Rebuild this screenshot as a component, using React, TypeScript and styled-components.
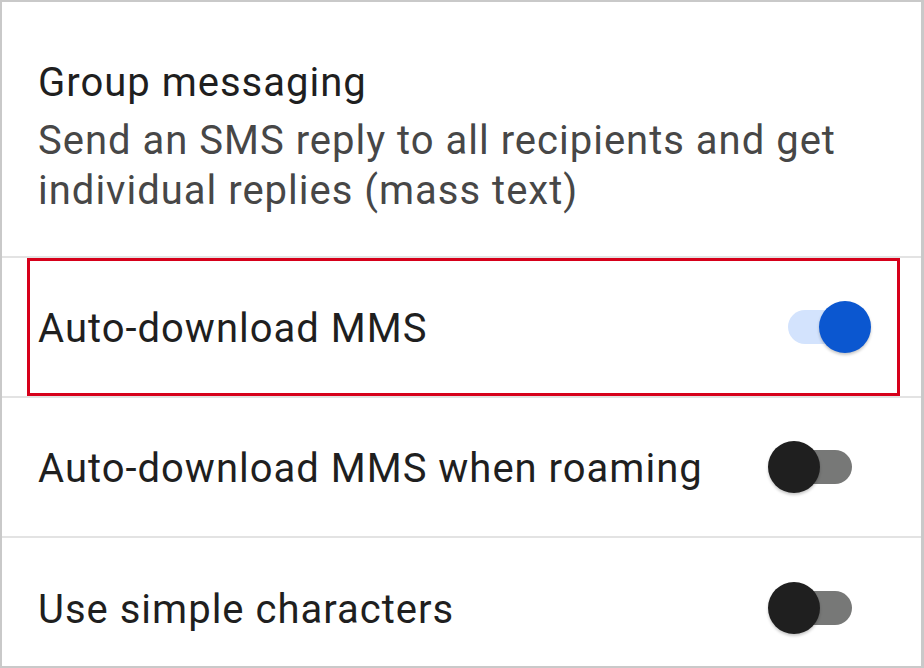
import styled, { createGlobalStyle } from "styled-components";

const GlobalStyle = createGlobalStyle`
  html, body {
    margin: 0;
    padding: 0;
    background: #ffffff;
  }
  body {
    font-family: Roboto, "Noto Sans", "Liberation Sans", sans-serif;
  }
`;

const Frame = styled.div`
  box-sizing: border-box;
  width: 924px;
  height: 668px;
  border: 2px solid #c9c9c9;
  border-right-width: 3px;
  overflow: hidden;
  background: #ffffff;
`;

const Row = styled.div<{ $height: number }>`
  position: relative;
  box-sizing: border-box;
  height: ${(p) => p.$height}px;
  display: flex;
  align-items: center;
  justify-content: space-between;
  padding-left: 36px;
  border-bottom: 2px solid #e3e3e3;

  &:last-child {
    border-bottom: none;
  }
`;

const TextBlock = styled.div`
  display: flex;
  flex-direction: column;
  align-self: flex-start;
  padding-top: 56px;
`;

const Title = styled.div`
  font-size: 40px;
  line-height: 50px;
  letter-spacing: 1px;
  color: #1f1f1f;
`;

const Summary = styled.div`
  margin-top: 8px;
  font-size: 40px;
  line-height: 50px;
  letter-spacing: 1px;
  color: #474747;
`;

const Label = styled.div`
  font-size: 40px;
  line-height: 50px;
  letter-spacing: 1px;
  color: #1f1f1f;
  padding-top: 4px;
`;

const Highlight = styled.div`
  position: absolute;
  left: 25px;
  right: 21px;
  top: 0;
  bottom: 0;
  border: 3px solid #d6001a;
  pointer-events: none;
`;

const Track = styled.div<{ $on: boolean }>`
  position: relative;
  width: 78px;
  height: 34px;
  border-radius: 17px;
  margin-right: ${(p) => (p.$on ? 55 : 69)}px;
  background: ${(p) => (p.$on ? "#d3e3fd" : "#777877")};
`;

const Thumb = styled.div<{ $on: boolean }>`
  position: absolute;
  top: -9px;
  left: ${(p) => (p.$on ? "31px" : "-6px")};
  width: 52px;
  height: 52px;
  border-radius: 50%;
  background: ${(p) => (p.$on ? "#0b57d0" : "#1f1f1f")};
  box-shadow: 0 2px 3px rgba(0, 0, 0, 0.22);
`;

const Switch = ({ on }: { on: boolean }) => (
  <Track $on={on}>
    <Thumb $on={on} />
  </Track>
);

const settings = [
  { label: "Auto-download MMS", on: true, highlighted: true },
  { label: "Auto-download MMS when roaming", on: false, highlighted: false },
  { label: "Use simple characters", on: false, highlighted: false },
];

const App = () => {
  return (
    <>
      <GlobalStyle />
      <Frame>
        <Row $height={256}>
          <TextBlock>
            <Title>Group messaging</Title>
            <Summary>
              Send an SMS reply to all recipients and get
              <br />
              individual replies (mass text)
            </Summary>
          </TextBlock>
        </Row>
        {settings.map((s) => (
          <Row key={s.label} $height={140}>
            <Label>{s.label}</Label>
            <Switch on={s.on} />
            {s.highlighted && <Highlight />}
          </Row>
        ))}
      </Frame>
    </>
  );
};

export default App;
